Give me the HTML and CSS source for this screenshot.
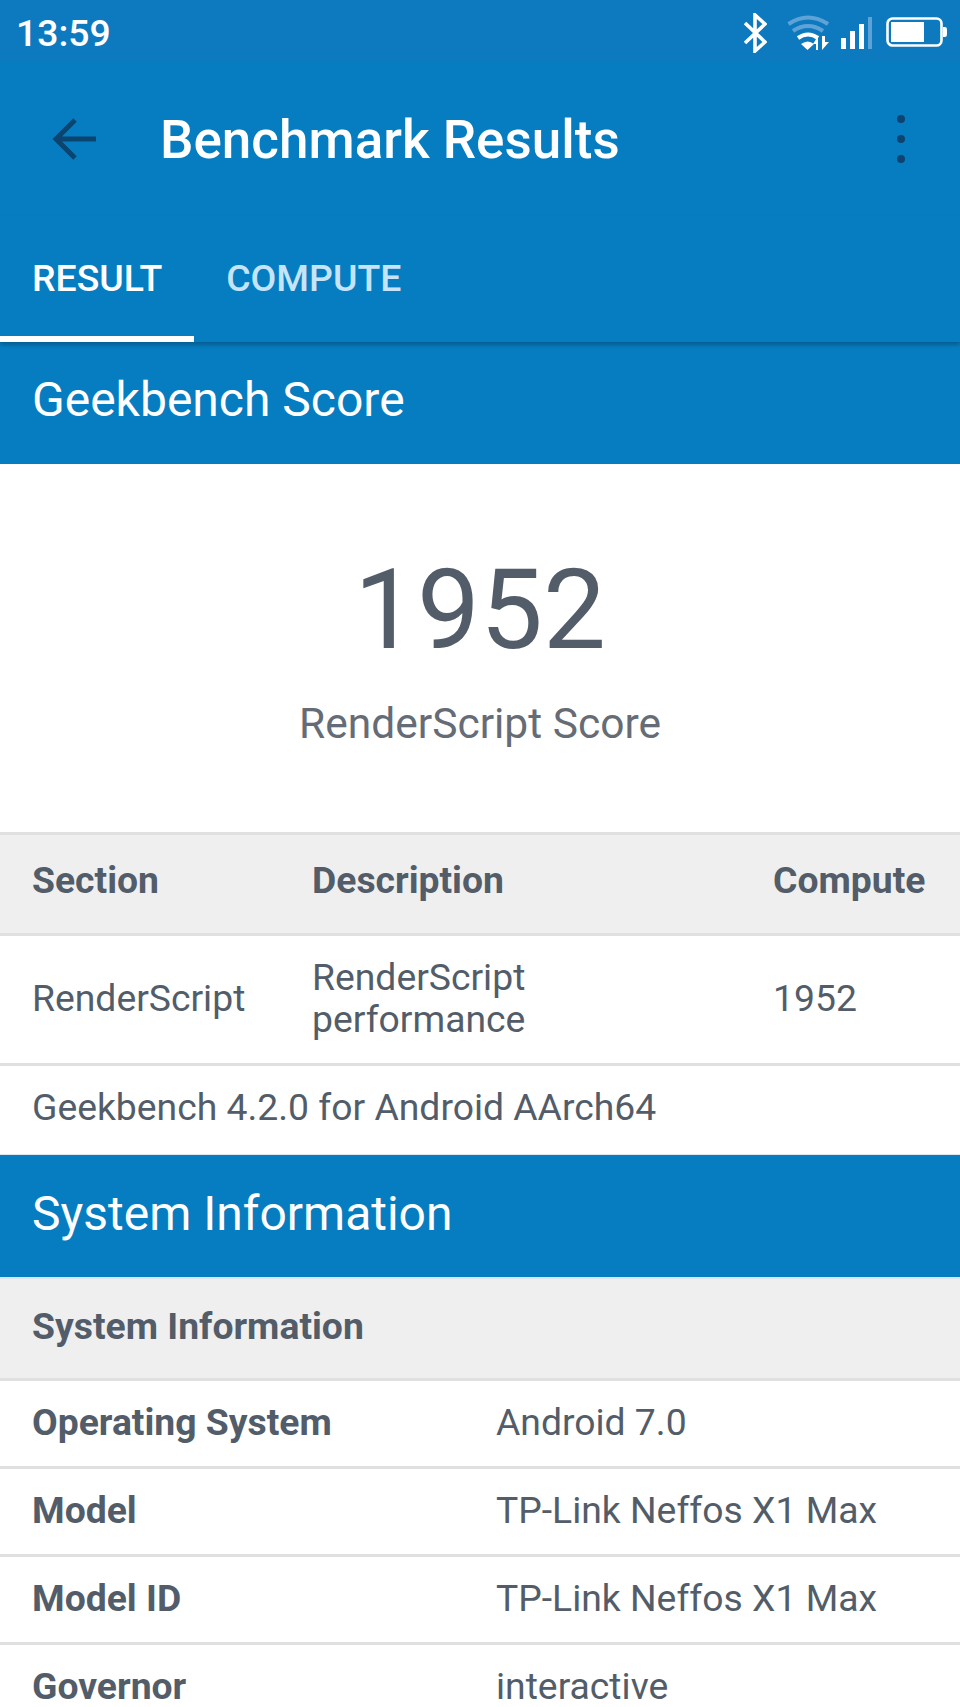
FILE: index.html
```html
<!DOCTYPE html>
<html lang="en">
<head>
<meta charset="utf-8">
<title>Benchmark Results</title>
<link rel="stylesheet" href="styles.css">
</head>
<body>
<div class="status">
  <span class="time">13:59</span>
  <div class="status-icons">
    <svg class="i-bt" width="24" height="40" viewBox="0 0 24 40"><path d="M2 10 L22 29 L12 38 V2 L22 11 L2 30" fill="none" stroke="#fff" stroke-width="3.6"/></svg>
    <svg class="i-wifi" width="43" height="35" viewBox="0 0 43 35">
      <path d="M1.5 9 Q21 -4 41 9" fill="none" stroke="#5fa3d6" stroke-width="4"/>
      <path d="M6 16 Q21 6 36 16" fill="none" stroke="#5fa3d6" stroke-width="4"/>
      <path d="M11 23 Q21 16 31 23" fill="none" stroke="#fff" stroke-width="4"/>
      <path d="M14 29 Q21 24 27 29 L20.5 35Z" fill="#fff"/>
      <path d="M29 35 V29 H26 L31 21 V35Z" fill="#fff"/>
      <path d="M35 21 V35 L42 27 H38 V21Z" fill="#fff"/>
    </svg>
    <svg class="i-signal" width="31" height="32" viewBox="0 0 31 32">
      <rect x="0" y="21" width="5" height="11" fill="#fff"/>
      <rect x="9" y="14" width="5" height="18" fill="#fff"/>
      <rect x="18" y="7" width="5" height="25" fill="#fff"/>
      <rect x="27" y="0" width="4" height="32" fill="#5fa3d6"/>
    </svg>
    <svg class="i-batt" width="62" height="30" viewBox="0 0 62 30">
      <rect x="1.5" y="1.5" width="54" height="27" rx="5" fill="none" stroke="#fff" stroke-width="2.6"/>
      <rect x="5" y="5" width="33" height="20" fill="#fff"/>
      <path d="M57 10 H59 Q61 10 61 13 V17 Q61 20 59 20 H57Z" fill="#fff"/>
    </svg>
  </div>
</div>
<header class="toolbar">
  <svg class="back" width="44" height="44" viewBox="0 0 44 44"><path d="M44 22 H4 M23 3 L4 22 L23 41" fill="none" stroke="#0b446f" stroke-width="5"/></svg>
  <h1 class="title">Benchmark Results</h1>
  <div class="more"><i></i><i></i><i></i></div>
</header>
<nav class="tabs">
  <div class="tab active">RESULT</div>
  <div class="tab">COMPUTE</div>
</nav>
<section class="band band-first">Geekbench Score</section>
<div class="score">
  <div class="score-num">1952</div>
  <div class="score-label">RenderScript Score</div>
</div>
<div class="row3 thead">
  <div>Section</div><div>Description</div><div>Compute</div>
</div>
<div class="row3 tbody">
  <div>RenderScript</div><div>RenderScript<br>performance</div><div>1952</div>
</div>
<div class="note">Geekbench 4.2.0 for Android AArch64</div>
<section class="band band-second">System Information</section>
<div class="subhead">System Information</div>
<div class="row2"><b>Operating System</b><span>Android 7.0</span></div>
<div class="row2"><b>Model</b><span>TP-Link Neffos X1 Max</span></div>
<div class="row2"><b>Model ID</b><span>TP-Link Neffos X1 Max</span></div>
<div class="row2"><b>Governor</b><span>interactive</span></div>
</body>
</html>
```
FILE: styles.css
```css
* { box-sizing: border-box; }
html, body { margin: 0; padding: 0; }
body {
  width: 960px;
  height: 1707px;
  overflow: hidden;
  background: #fff;
  font-family: Roboto, sans-serif;
  color: #525d69;
}
.status {
  height: 62px;
  background: #0d7abf;
  display: flex;
  align-items: center;
  justify-content: space-between;
  padding: 3px 12px 0 16px;
  color: #fff;
}
.time { font-size: 37.3px; font-weight: 500; }
.status-icons { display: flex; align-items: center; }
.i-bt { margin-right: 20px; }
.i-wifi { margin-right: 11px; }
.i-signal { margin-right: 14px; }
.i-batt { margin-top: -2px; }
.toolbar {
  height: 154px;
  background: #077dc1;
  display: flex;
  align-items: center;
  padding: 2px 0 0 52px;
  color: #fff;
}
.title { margin: 0 0 0 64px; font-size: 53px; font-weight: 500; flex: 1; }
.more { display: flex; flex-direction: column; gap: 12px; margin: -2px 55px 0 0; }
.more i { display: block; width: 8px; height: 8px; border-radius: 50%; background: #0b446f; }
.back { margin-top: -2px; }
.tabs {
  height: 126px;
  background: #077dc1;
  display: flex;
  color: #c6e4f9;
  font-size: 37.4px;
  font-weight: 500;
  position: relative;
  box-shadow: 0 3px 4px rgba(0,0,0,.25);
}
.tab { padding: 0 32px; height: 126px; line-height: 124px; }
.tab.active { color: #fff; border-bottom: 6px solid #fff; }
.band { background: #077dc1; color: #fff; display: flex; align-items: center; padding: 0 32px; font-size: 48px; }
.band-first { height: 122px; padding-bottom: 7px; }
.band-second { height: 122px; padding-bottom: 5px; }
.score { height: 368px; padding-top: 81px; text-align: center; }
.score-num { font-size: 112px; line-height: 130px; }
.score-label { font-size: 42.5px; line-height: 56px; margin-top: 21px; color: #666c75; }
.row3 { display: grid; grid-template-columns: 280px 461px 1fr; padding-left: 32px; font-size: 37.3px; align-items: center; }
.thead { height: 104px; background: #efefef; border-top: 3px solid #e0e0e0; border-bottom: 3px solid #e0e0e0; font-weight: 700; padding-bottom: 8px; }
.tbody { height: 130px; line-height: 42.4px; border-bottom: 3px solid #e0e0e0; padding-bottom: 3px; }
.note { height: 89px; display: flex; align-items: center; padding: 0 0 7px 32px; font-size: 37.3px; border-bottom: 1px solid #dfe8ee; }
.subhead { height: 104px; background: #efefef; display: flex; align-items: center; padding-left: 32px; font-size: 37.3px; font-weight: 700; border-top: 2px solid #d9e6ee; border-bottom: 3px solid #e0e0e0; padding-bottom: 5px; }
.row2 { height: 88px; display: grid; grid-template-columns: 464px 1fr; align-items: center; padding: 0 0 4px 32px; font-size: 37.3px; border-bottom: 3px solid #e0e0e0; }
```
